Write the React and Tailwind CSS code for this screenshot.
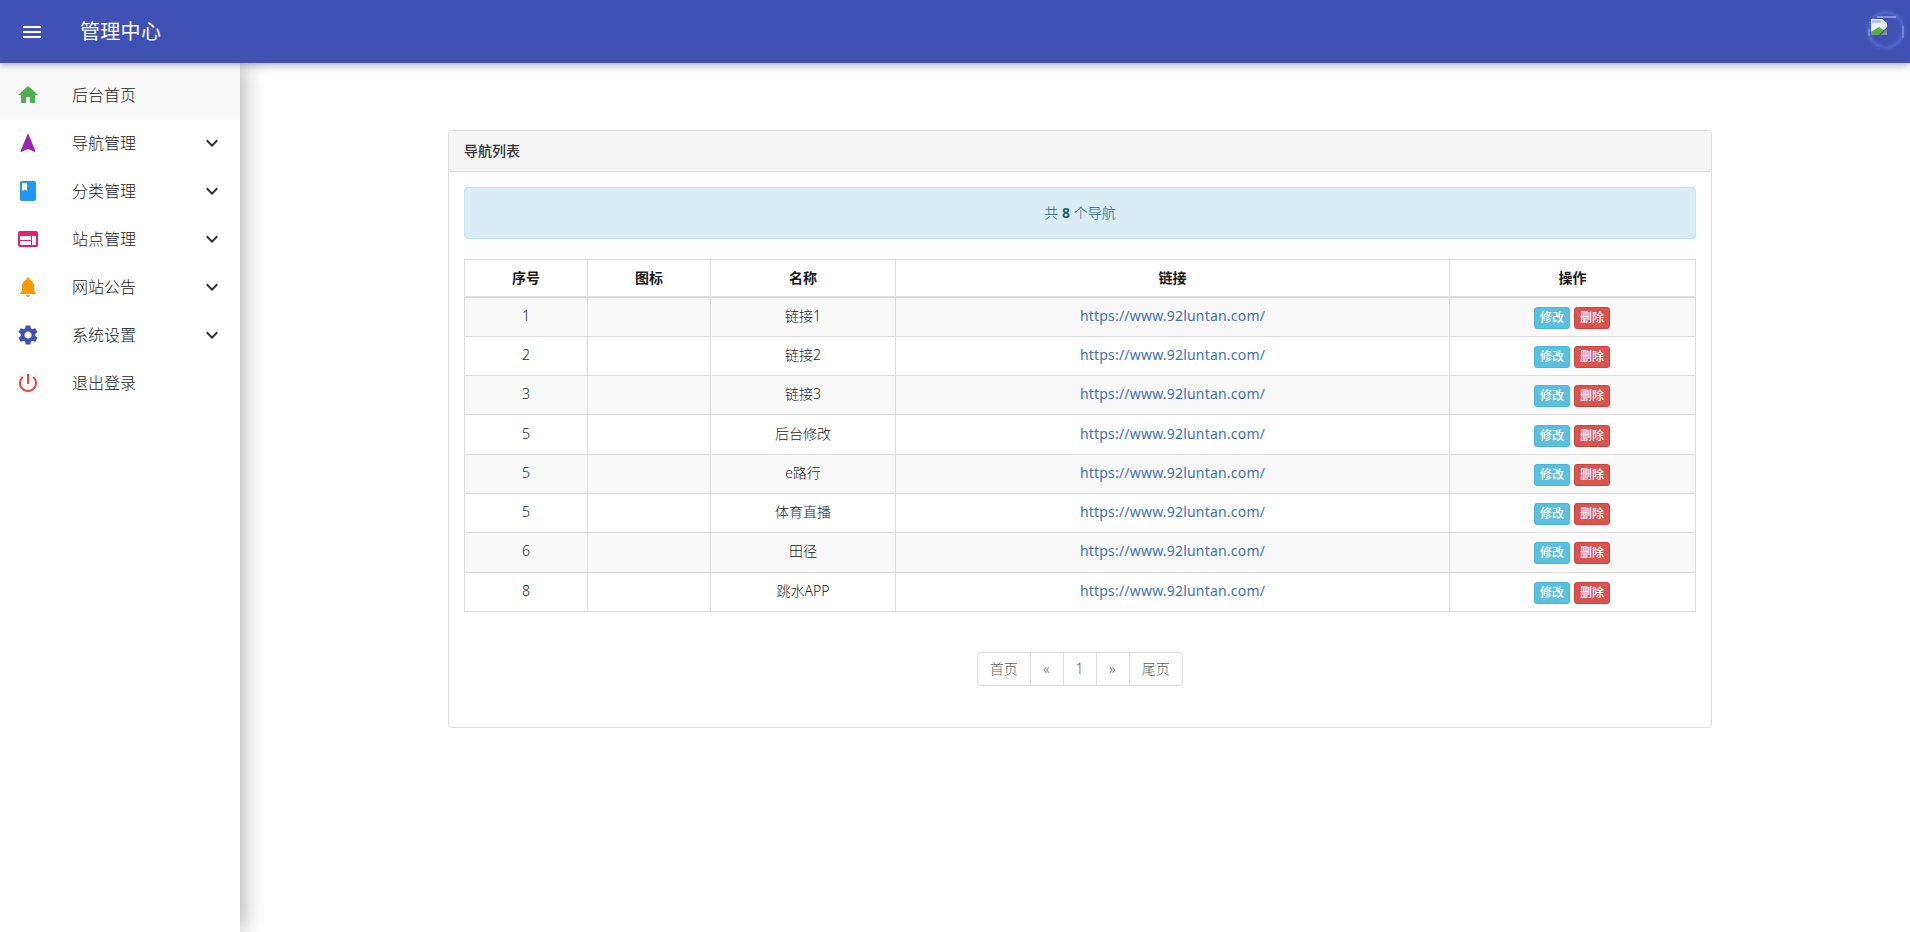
import React from 'react';

const Icon = ({ d, className }) => (
  <svg viewBox="0 0 24 24" className={className} fill="currentColor">
    <path d={d} />
  </svg>
);

const icons = {
  menu: 'M3 18h18v-2H3v2zm0-5h18v-2H3v2zm0-7v2h18V6H3z',
  home: 'M10 20v-6h4v6h5v-8h3L12 3 2 12h3v8z',
  nav: 'M12 2L4.5 20.29l.71.71L12 18l6.79 3 .71-.71z',
  book: 'M18 2H6c-1.1 0-2 .9-2 2v16c0 1.1.9 2 2 2h12c1.1 0 2-.9 2-2V4c0-1.1-.9-2-2-2zM6 4h5v8l-2.5-1.5L6 12V4z',
  web: 'M20 4H4c-1.1 0-1.99.9-1.99 2L2 18c0 1.1.9 2 2 2h16c1.1 0 2-.9 2-2V6c0-1.1-.9-2-2-2zm-5 14H4v-4h11v4zm0-5H4V9h11v4zm5 5h-4V9h4v9z',
  bell: 'M12 22c1.1 0 2-.9 2-2h-4c0 1.1.89 2 2 2zm6-6v-5c0-3.07-1.64-5.64-4.5-6.32V4c0-.83-.67-1.5-1.5-1.5s-1.5.67-1.5 1.5v.68C7.63 5.36 6 7.92 6 11v5l-2 2v1h16v-1l-2-2z',
  gear: 'M19.14 12.94c.04-.3.06-.61.06-.94 0-.32-.02-.64-.07-.94l2.03-1.58c.18-.14.23-.41.12-.61l-1.92-3.32c-.12-.22-.37-.29-.59-.22l-2.39.96c-.5-.38-1.03-.7-1.62-.94l-.36-2.54c-.04-.24-.24-.41-.48-.41h-3.84c-.24 0-.43.17-.47.41l-.36 2.54c-.59.24-1.13.57-1.62.94l-2.39-.96c-.22-.08-.47 0-.59.22L2.74 8.87c-.12.21-.08.47.12.61l2.03 1.58c-.05.3-.09.63-.09.94s.02.64.07.94l-2.03 1.58c-.18.14-.23.41-.12.61l1.92 3.32c.12.22.37.29.59.22l2.39-.96c.5.38 1.03.7 1.62.94l.36 2.54c.05.24.24.41.48.41h3.84c.24 0 .44-.17.47-.41l.36-2.54c.59-.24 1.13-.56 1.62-.94l2.39.96c.22.08.47 0 .59-.22l1.92-3.32c.12-.22.07-.47-.12-.61l-2.01-1.58zM12 15.6c-1.98 0-3.6-1.62-3.6-3.6s1.62-3.6 3.6-3.6 3.6 1.62 3.6 3.6-1.62 3.6-3.6 3.6z',
  power: 'M13 3h-2v10h2V3zm4.83 2.17l-1.42 1.42C17.99 7.86 19 9.81 19 12c0 3.87-3.13 7-7 7s-7-3.13-7-7c0-2.19 1.01-4.14 2.58-5.42L6.17 5.17C4.23 6.82 3 9.26 3 12c0 4.97 4.03 9 9 9s9-4.03 9-9c0-2.74-1.23-5.18-3.17-6.83z',
  more: 'M16.59 8.59L12 13.17 7.41 8.59 6 10l6 6 6-6z',
};

const menu = [
  { name: '后台首页', icon: icons.home, color: 'text-[#4caf50]', active: true },
  { name: '导航管理', icon: icons.nav, color: 'text-[#9c27b0]', more: true },
  { name: '分类管理', icon: icons.book, color: 'text-[#2196f3]', more: true },
  { name: '站点管理', icon: icons.web, color: 'text-[#e91e63]', more: true },
  { name: '网站公告', icon: icons.bell, color: 'text-[#ff9800]', more: true },
  { name: '系统设置', icon: icons.gear, color: 'text-[#3f51b5]', more: true },
  { name: '退出登录', icon: icons.power, color: 'text-[#f44336]' },
];

const rows = [
  ['1', '链接1'],
  ['2', '链接2'],
  ['3', '链接3'],
  ['5', '后台修改'],
  ['5', 'e路行'],
  ['5', '体育直播'],
  ['6', '田径'],
  ['8', '跳水APP'],
];

const pages = ['首页', '«', '1', '»', '尾页'];

// broken image placeholder clipped by the round avatar
const Avatar = () => (
  <div className="w-[34px] h-[34px] rounded-full shadow-[0_0_5px_rgba(130,160,255,0.7),inset_0_0_4px_rgba(130,160,255,0.45)]">
    <svg viewBox="0 0 40 40" className="w-10 h-10 -m-[3px]">
      <path d="M11 4h19" stroke="#c9cfea" strokeWidth="1" />
      <path d="M3 16v7M37 13v12" stroke="#9aa6dd" strokeWidth="1" />
      <path d="M5 6h11l5 4v12H5z" fill="#e8eefb" />
      <path d="M6 7h8l2 3H6z" fill="#a9c4f2" />
      <path d="M5 22v-3l8-5 6 4-4 4z" fill="#5cae3a" />
      <path d="M15 22l6-6v6z" fill="#8e8e9a" />
      <path d="M12 24L23 13" stroke="#3f51b5" strokeWidth="1.6" />
    </svg>
  </div>
);

export default function App() {
  return (
    <div className="flex flex-col h-[932px] overflow-hidden bg-white text-[#333] font-['Noto_Sans','Noto_Sans_CJK_SC',sans-serif]">
      {/* Header */}
      <header className="relative z-20 flex items-center justify-between h-[63px] shrink-0 bg-[#3f51b5] text-white shadow-[0_2px_8px_rgba(0,0,0,0.35)]">
        <div className="flex items-center">
          <Icon d={icons.menu} className="w-6 h-6 ml-5" />
          <span className="ml-9 text-[20px] tracking-[0.3px]">管理中心</span>
        </div>
        <div className="mr-[7px]">
          <Avatar />
        </div>
      </header>

      <div className="flex flex-1 min-h-0">
        {/* Sidebar */}
        <aside className="relative z-10 w-[240px] shrink-0 bg-white pt-2 font-light text-[#1a1a1a] shadow-[0_0_24px_rgba(0,0,0,0.4)]">
          {menu.map((item) => (
            <div key={item.name} className={`flex items-center h-12 px-4 text-base ${item.active ? 'bg-[#fafafa]' : ''}`}>
              <Icon d={item.icon} className={`w-6 h-6 shrink-0 ${item.color}`} />
              <span className="ml-8 flex-1">{item.name}</span>
              {item.more && <Icon d={icons.more} className="w-6 h-6 text-[#333]" />}
            </div>
          ))}
        </aside>

        {/* Main */}
        <main className="flex-1 pt-[67px] pl-[208px] pr-[199px]">
          <div className="border border-[#ddd] rounded text-sm">
            <div className="h-[41px] flex items-center px-[15px] bg-[#f5f5f5] border-b border-[#ddd] rounded-t font-medium">
              导航列表
            </div>
            <div className="p-[15px] pb-[41px]">
              <div className="flex items-center justify-center h-[52px] mb-5 bg-[#d9edf7] border border-[#bce8f1] rounded text-[#1f5d7d] font-light">
                共&nbsp;<b className="font-bold">8</b>&nbsp;个导航
              </div>
              <table className="w-full table-fixed border-collapse text-center font-light text-[#1a1a1a]">
                <colgroup>
                  <col className="w-[123px]" />
                  <col className="w-[123px]" />
                  <col className="w-[185px]" />
                  <col className="w-[554px]" />
                  <col className="w-[246px]" />
                </colgroup>
                <thead>
                  <tr className="h-[37.5px]">
                    {['序号', '图标', '名称', '链接', '操作'].map((h) => (
                      <th key={h} className="border border-b-2 border-[#ddd] font-bold pb-px">{h}</th>
                    ))}
                  </tr>
                </thead>
                <tbody>
                  {rows.map((r, i) => (
                    <tr key={i} className={`h-[39.3px] ${i % 2 === 0 ? 'bg-[#f9f9f9]' : ''}`}>
                      <td className="border border-[#ddd] pb-[2px]">{r[0]}</td>
                      <td className="border border-[#ddd]"></td>
                      <td className="border border-[#ddd] pb-[2px]">{r[1]}</td>
                      <td className="border border-[#ddd] pb-[2px] font-normal text-[#4272b0] tracking-[0.2px]">https://www.92luntan.com/</td>
                      <td className="border border-[#ddd]">
                        <div className="flex justify-center gap-1 pt-[2px] pr-px text-xs font-medium text-white">
                          <span className="w-9 h-[22px] flex items-center justify-center rounded-[3px] bg-[#5bc0de] border border-[#46b8da]">修改</span>
                          <span className="w-9 h-[22px] flex items-center justify-center rounded-[3px] bg-[#d9534f] border border-[#d43f3a]">删除</span>
                        </div>
                      </td>
                    </tr>
                  ))}
                </tbody>
              </table>
              <div className="flex justify-center mt-10">
                <div className="flex h-[34px] border border-[#ddd] rounded text-[#5f5f5f] font-light divide-x divide-[#ddd]">
                  {pages.map((p) => (
                    <span key={p} className={`flex items-center justify-center ${p.length > 1 ? 'w-[52.5px]' : 'w-[33px]'}`}>{p}</span>
                  ))}
                </div>
              </div>
            </div>
          </div>
        </main>
      </div>
    </div>
  );
}
